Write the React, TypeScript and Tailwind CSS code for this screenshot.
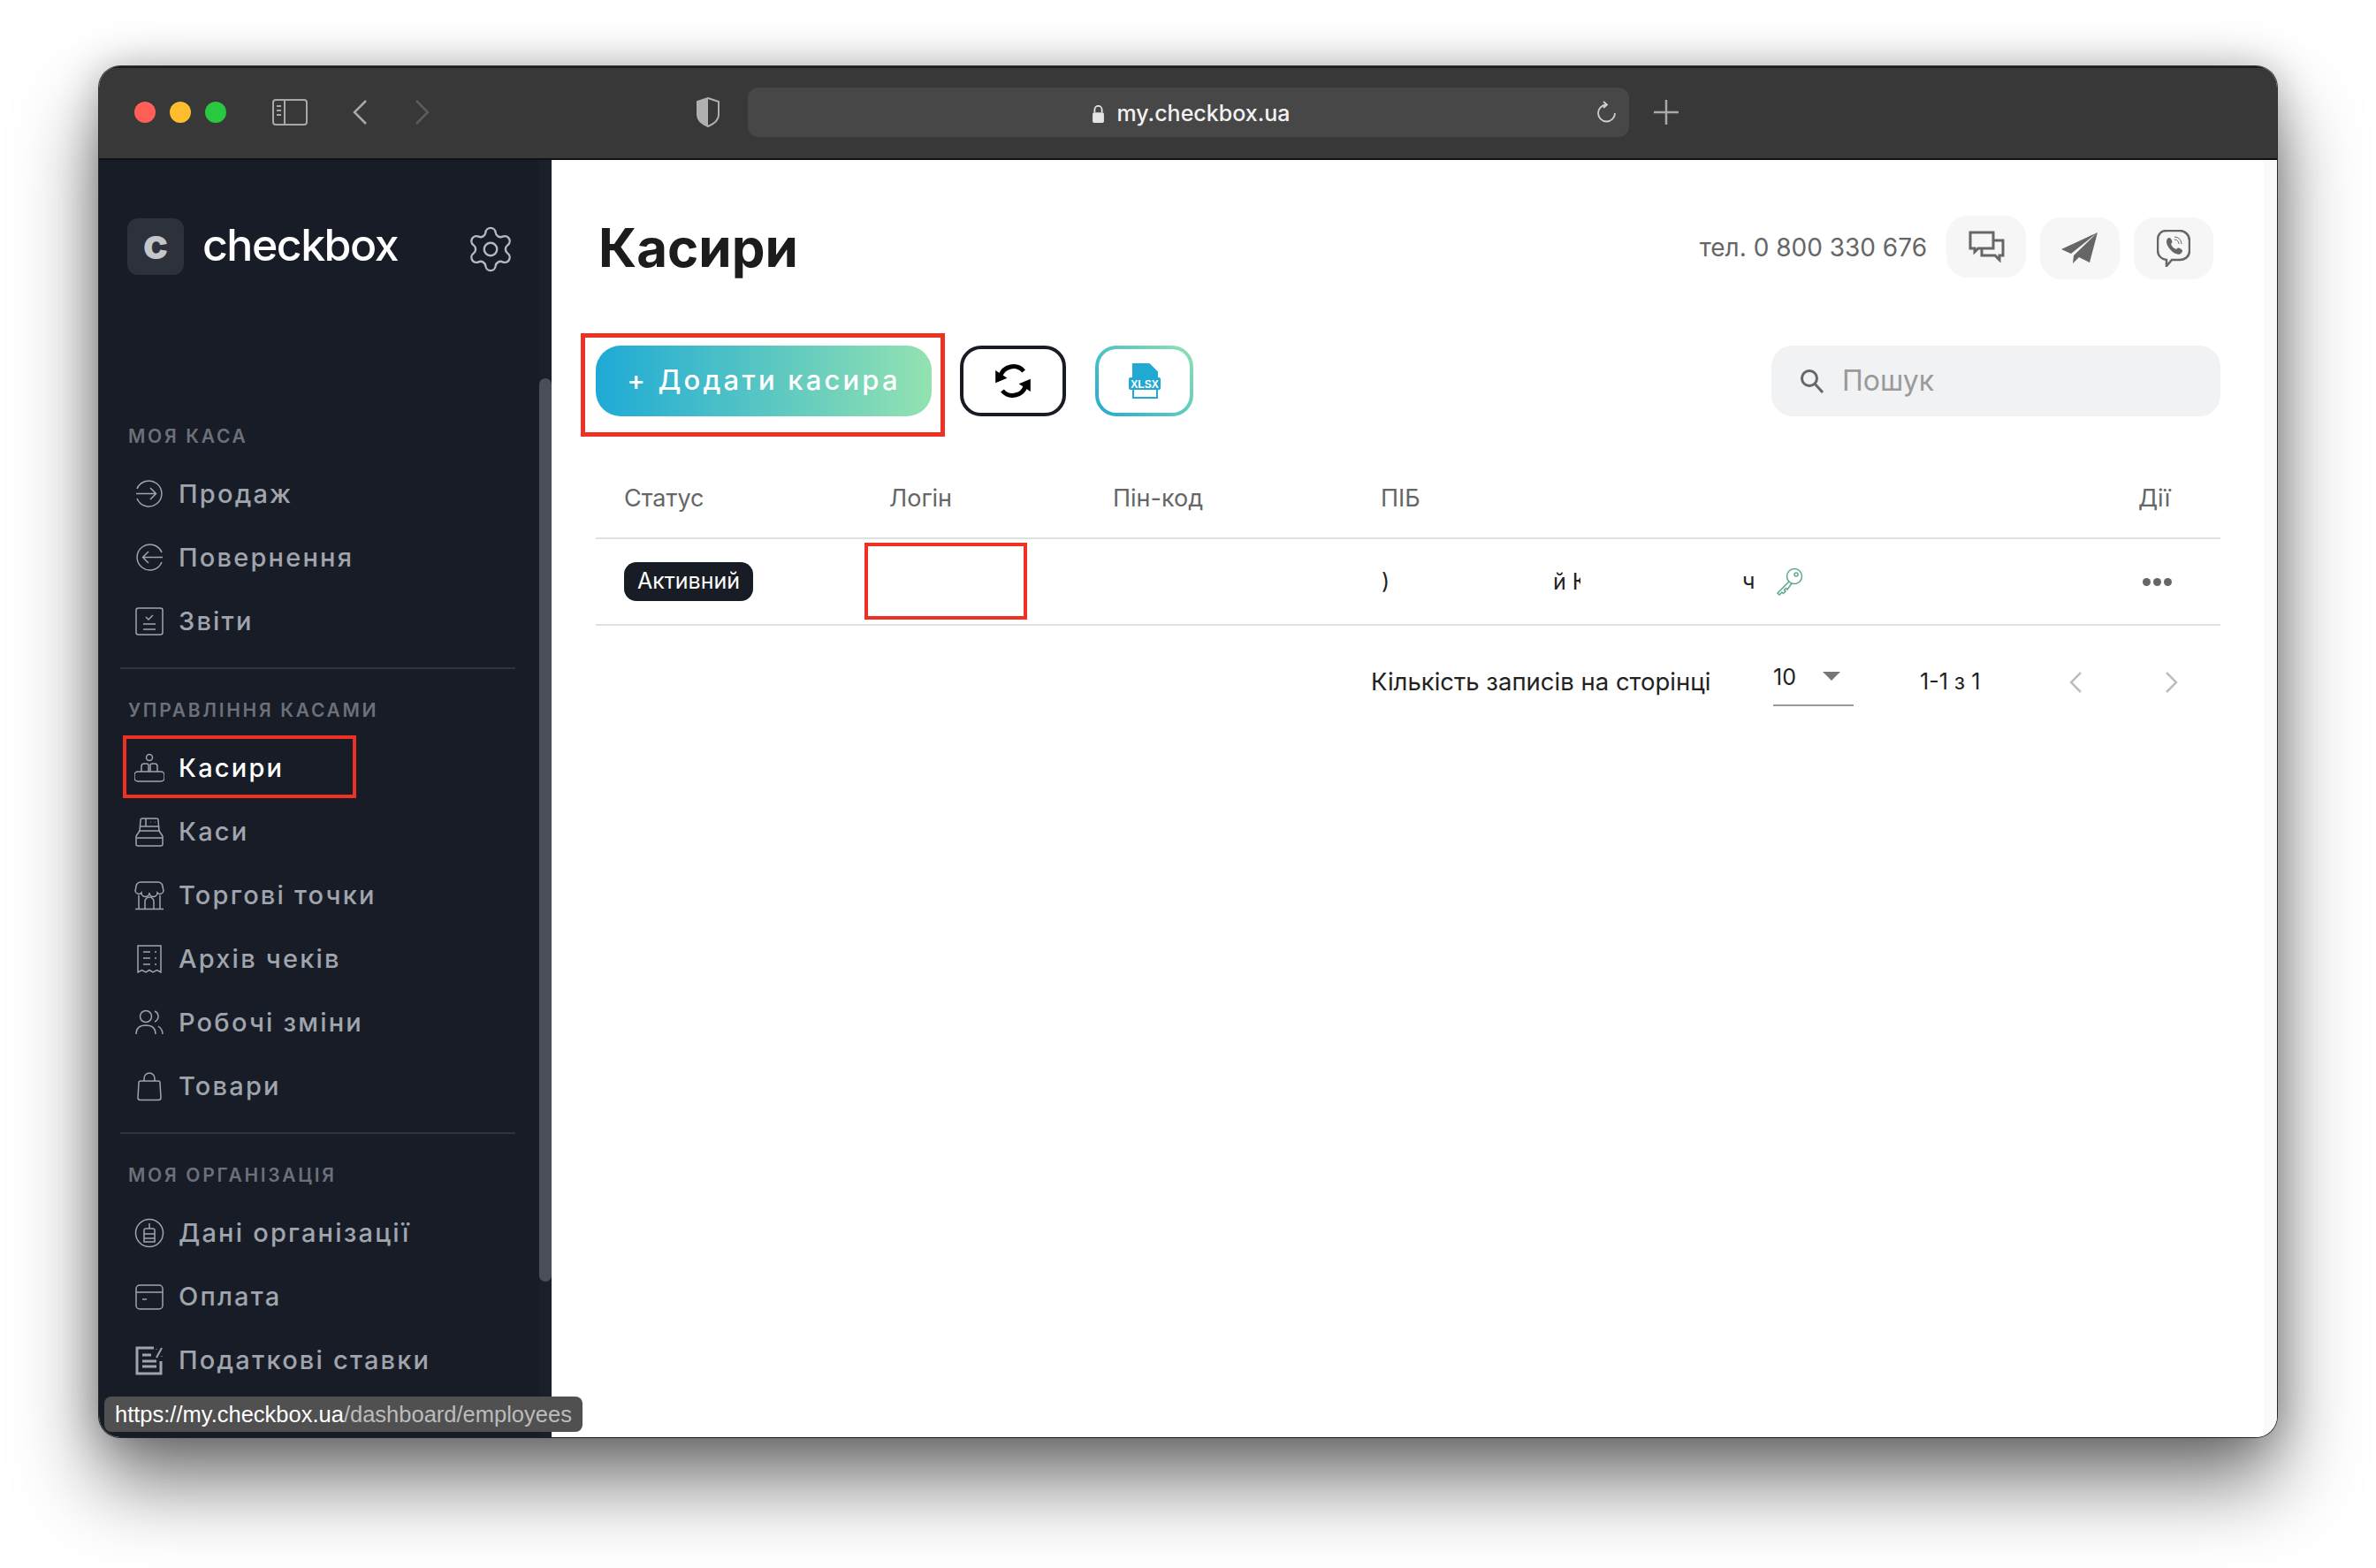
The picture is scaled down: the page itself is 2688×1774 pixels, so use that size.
import { Settings } from "lucide-react";

const iconClass = "w-[34px] h-[34px] shrink-0 fill-none stroke-[#a0a4ad] stroke-[1.5]";

const icons: Record<string, React.ReactNode> = {
  sale: (
    <>
      <path d="M3 11a14.5 14.5 0 1 1 0 11" />
      <path d="M2 16.5h22M18 10l6.5 6.5L18 23" />
    </>
  ),
  back: (
    <>
      <path d="M31 11a14.5 14.5 0 1 0 0 11" />
      <path d="M32 16.5H10M16 10l-6.5 6.5L16 23" />
    </>
  ),
  report: (
    <>
      <rect x="2" y="2" width="30" height="30" rx="2.5" />
      <path d="M13 12l3 3 5-5M10 20h14M10 26h14" />
    </>
  ),
  cashiers: (
    <>
      <circle cx="17" cy="5" r="3.5" />
      <path d="M8 21v-6a3 3 0 0 1 3-3h3a2 2 0 0 1 2 2v7M18 21v-7a2 2 0 0 1 2-2h3a3 3 0 0 1 3 3v6" />
      <rect x="0" y="21" width="34" height="11" rx="4" />
    </>
  ),
  registers: (
    <>
      <path d="M6 16l1-12a2 2 0 0 1 2-2h16a2 2 0 0 1 2 2l1 12" />
      <path d="M13 2v9M7 11h20M18 6h.5M23 6h.5" />
      <path d="M6 16L2 22v9a2 2 0 0 0 2 2h26a2 2 0 0 0 2-2v-9l-4-6zM2 24h30" />
    </>
  ),
  shop: (
    <>
      <path d="M7 2h20a5 5 0 0 1 5 5l1 5a4 4 0 0 1-7 2 4.500 4.500 0 0 1-9 0 4.500 4.500 0 0 1-9 0 4 4 0 0 1-7-2l1-5a5 5 0 0 1 5-5z" />
      <path d="M5 17v15M29 17v15M1 32.500h32M12 32v-8a5 5 0 0 1 10 0v8" />
    </>
  ),
  archive: (
    <>
      <path d="M4 2h26v30l-4.500-2.500L21 32l-4-2.500L13 32l-4.500-2.500L4 32z" />
      <path d="M10 9h8M10 16h8M10 23h8M23 9h2M23 16h2M23 23h2" />
    </>
  ),
  shifts: (
    <>
      <circle cx="13" cy="10" r="6.500" />
      <path d="M2 30c0-7 4-10 11-10s11 3 11 10M23 4a6.500 6.500 0 0 1 0 12M27 21c3 2 5 5 5 9" />
    </>
  ),
  goods: (
    <>
      <path d="M7 11h20a2 2 0 0 1 2 2l1 17a2.500 2.500 0 0 1-2.500 2.500h-21A2.500 2.500 0 0 1 4 30l1-17a2 2 0 0 1 2-2z" />
      <path d="M11 11V8a6 6 0 0 1 12 0v3" />
    </>
  ),
  org: (
    <>
      <circle cx="17" cy="17" r="15.500" />
      <path d="M11 14a2 2 0 0 1 2-2h8a2 2 0 0 1 2 2v13H11zM17 12V6M11 18h12M11 23h12" />
    </>
  ),
  pay: (
    <>
      <rect x="2" y="4" width="30" height="27" rx="4" />
      <path d="M2 12h30M9 20h5" />
    </>
  ),
  tax: (
    <>
      <path d="M22 3H3v29h27V18" strokeWidth={3} />
      <path d="M9 11h10M9 18h16M9 24h16" strokeWidth={3} />
      <path d="M31 3l-6 11M25 4v.5M31 12v.5" strokeWidth={2} />
    </>
  ),
};

function NavIcon({ name }: { name: string }) {
  return (
    <svg viewBox="0 0 34 34" className={iconClass}>
      {icons[name]}
    </svg>
  );
}

function NavItem({ icon, label, active }: { icon: string; label: string; active?: boolean }) {
  return (
    <div className="flex items-center h-[72px] pl-[16px] gap-[16px]">
      <NavIcon name={icon} />
      <span
        className={`font-['Inter',sans-serif] font-medium text-[29px] tracking-[2.2px] ${
          active ? "text-white" : "text-[#a0a4ad]"
        }`}
      >
        {label}
      </span>
    </div>
  );
}

function SectionLabel({ children }: { children: string }) {
  return (
    <div className="h-[28px] leading-[28px] pl-[9px] font-['Inter',sans-serif] font-semibold text-[21px] tracking-[2.7px] text-[#6c7079]">
      {children}
    </div>
  );
}

function Sidebar() {
  return (
    <aside className="relative w-[512px] h-full shrink-0 bg-[#171c26] overflow-hidden">
      <div className="flex items-start h-[299px] pl-[32px] pt-[66px]">
        <div className="flex items-center justify-center w-[64px] h-[64px] rounded-[12px] bg-[#2d313b] font-['Inter',sans-serif] font-extrabold text-[48px] text-[#c4c6ca] pb-[6px]">
          c
        </div>
        <span className="ml-[21px] font-['Inter',sans-serif] font-medium text-[50px] leading-[60px] tracking-[-1.5px] text-white">
          checkbox
        </span>
        <Settings className="ml-[76px] mt-[6px] w-[58px] h-[58px] text-[#b5b8be] shrink-0" strokeWidth={1} />
      </div>

      <div className="flex flex-col pl-[24px] w-[471px]">
        <SectionLabel>МОЯ КАСА</SectionLabel>
        <div className="mt-[15px]">
          <NavItem icon="sale" label="Продаж" />
          <NavItem icon="back" label="Повернення" />
          <NavItem icon="report" label="Звіти" />
        </div>
        <div className="mt-[16px] h-[2px] bg-[#2f333c]" />
        <div className="mt-[33px]">
          <SectionLabel>УПРАВЛІННЯ КАСАМИ</SectionLabel>
        </div>
        <div className="relative mt-[15px]">
          <NavItem icon="cashiers" label="Касири" active />
          <div className="absolute left-[3px] -top-[1px] w-[264px] h-[71px] border-[4px] border-[#ee3124]" />
          <NavItem icon="registers" label="Каси" />
          <NavItem icon="shop" label="Торгові точки" />
          <NavItem icon="archive" label="Архів чеків" />
          <NavItem icon="shifts" label="Робочі зміни" />
          <NavItem icon="goods" label="Товари" />
        </div>
        <div className="mt-[16px] h-[2px] bg-[#2f333c]" />
        <div className="mt-[33px]">
          <SectionLabel>МОЯ ОРГАНІЗАЦІЯ</SectionLabel>
        </div>
        <div className="mt-[15px]">
          <NavItem icon="org" label="Дані організації" />
          <NavItem icon="pay" label="Оплата" />
          <NavItem icon="tax" label="Податкові ставки" />
        </div>
      </div>

      {/* scrollbar */}
      <div className="absolute right-0 top-0 bottom-0 w-[14px] bg-[#1a1f29]">
        <div className="absolute left-0 right-0 top-[247px] h-[1022px] rounded-[7px] bg-[#4b4e56]" />
      </div>
    </aside>
  );
}

function TitleBar() {
  return (
    <div className="flex items-center h-[106px] shrink-0 bg-[#383838] border-t-[2px] border-b-[2px] border-t-[#1c1c1c] border-b-[#111111] pb-[2px]">
      <div className="flex items-center gap-[16px] ml-[40px]">
        <div className="w-[24px] h-[24px] rounded-full bg-[#ff5f57]" />
        <div className="w-[24px] h-[24px] rounded-full bg-[#ffbd2e]" />
        <div className="w-[24px] h-[24px] rounded-full bg-[#28c840]" />
      </div>
      <svg viewBox="0 0 40 30" className="ml-[52px] w-[40px] h-[30px] fill-none stroke-[#a8a8a8] stroke-[2]">
        <rect x="1" y="1" width="38" height="28" rx="3" />
        <path d="M14 1v28M5 8h5M5 13h5M5 18h5" />
      </svg>
      <svg viewBox="0 0 18 30" className="ml-[50px] w-[18px] h-[30px] fill-none stroke-[#a8a8a8] stroke-[2.500]">
        <path d="M16 2L3 15l13 13" />
      </svg>
      <svg viewBox="0 0 18 30" className="ml-[53px] w-[18px] h-[30px] fill-none stroke-[#5c5c5c] stroke-[2.500]">
        <path d="M2 2l13 13L2 28" />
      </svg>
      <svg viewBox="0 0 28 34" className="ml-[300px] w-[28px] h-[34px]">
        <path d="M14 1l12 4v15c0 6-5 10-12 13C7 30 2 26 2 20V5z" fill="none" stroke="#b0b0b0" strokeWidth="2" />
        <path d="M14 1L2 5v15c0 6 5 10 12 13z" fill="#b0b0b0" />
      </svg>
      <div className="relative flex items-center justify-center ml-[31px] w-[997px] h-[56px] pl-[6px] rounded-[12px] bg-[#474747]">
        <svg viewBox="0 0 16 24" className="w-[15px] h-[22px] mr-[13px] mt-[3px]">
          <path d="M3.500 10V6.500a4.500 4.500 0 0 1 9 0V10" fill="none" stroke="#e4e4e4" strokeWidth="2" />
          <rect x="1" y="10" width="14" height="13" rx="2" fill="#e4e4e4" />
        </svg>
        <span className="mt-[3px] font-['Inter',sans-serif] font-medium text-[25px] text-[#f2f2f2]">my.checkbox.ua</span>
        <svg viewBox="0 0 24 26" className="absolute left-[960px] w-[24px] h-[26px] fill-none stroke-[#d0d0d0] stroke-[1.800]">
          <path d="M21 14a9.500 9.500 0 1 1-9.500-9.500M8 1l4 3.500L8 8" />
        </svg>
      </div>
      <svg viewBox="0 0 28 28" className="ml-[28px] w-[28px] h-[28px] fill-none stroke-[#a8a8a8] stroke-[2.500]">
        <path d="M14 0v28M0 14h28" />
      </svg>
    </div>
  );
}

function ContactButton({ children, raised }: { children: React.ReactNode; raised?: boolean }) {
  return (
    <div
      className={`flex items-center justify-center w-[90px] h-[70px] rounded-[24px] bg-[#f6f6f6] ${
        raised ? "-mt-[4px]" : ""
      }`}
    >
      {children}
    </div>
  );
}

function Header() {
  return (
    <div className="flex items-center justify-between h-[192px] pl-[53px] pr-[57px] pt-[8px]">
      <h1 className="-mt-[3px] font-['Inter',sans-serif] font-bold text-[60px] text-[#1c1c1c]">Касири</h1>
      <div className="flex items-center">
        <span className="-mt-[2px] font-['Inter',sans-serif] text-[28px] text-[#666666] mr-[22px]">тел. 0 800 330 676</span>
        <div className="flex items-center gap-[16px]">
          <ContactButton raised>
            <svg viewBox="0 0 42 36" className="w-[42px] h-[36px] fill-none stroke-[#666666] stroke-[3]">
              <path d="M3 2h26v18H12l-4 4v-4H3z" fill="#f6f6f6" />
              <path d="M30 11h10v17h-4v5l-5-5H16v-8" />
            </svg>
          </ContactButton>
          <ContactButton>
            <svg viewBox="0 0 42 36" className="w-[42px] h-[36px]">
              <path d="M41 0L0 19l11 5L41 0zM41 0L14 26l-1 9 7-7 12 6z" fill="#666666" />
            </svg>
          </ContactButton>
          <ContactButton>
            <svg viewBox="0 0 38 42" className="w-[38px] h-[42px] fill-none stroke-[#666666]">
              <path d="M11 1h15c6 0 11 5 11 11v12c0 6-5 10-11 10H17l-6 7v-7C5 33 1 29 1 23V12C1 5 5 1 11 1z" strokeWidth="2.500" />
              <path d="M12 10c2-2 4-1 5 2 1 2 0 3-1 4 1 3 3 5 6 6 1-1 2-2 4-1 3 1 4 3 2 5-2 3-6 2-10-1-5-4-9-11-6-15z" fill="#666666" stroke="none" />
              <path d="M20 8a8 8 0 0 1 8 8M20 11a5 5 0 0 1 5 5" strokeWidth="1" />
            </svg>
          </ContactButton>
        </div>
      </div>
    </div>
  );
}

function Toolbar() {
  return (
    <div className="flex items-center h-[117px] mt-[4px] pl-[33px] pr-[49px]">
      <div className="flex items-center justify-center w-[412px] h-[117px] pl-[2px] border-[5px] border-[#ee3124]">
        <button className="w-[380px] h-[80px] mb-[10px] rounded-[28px] bg-[linear-gradient(90deg,#1eaad6,#93e2b0)] font-['Inter',sans-serif] font-medium text-[31px] tracking-[3.2px] text-white">
          + Додати касира
        </button>
      </div>
      <div className="flex items-center justify-center ml-[17px] mb-[10px] w-[120px] h-[80px] rounded-[24px] border-[4px] border-[#181c25]">
        <svg viewBox="0 0 40 40" className="w-[44px] h-[44px] fill-none stroke-black stroke-[4.5]">
          <path d="M7 15A14 14 0 0 1 31 10" />
          <path d="M33 25A14 14 0 0 1 9 30" />
          <path d="M2 9l12 8-12 5z" fill="#000" stroke="none" />
          <path d="M38 31l-12-8 12-5z" fill="#000" stroke="none" />
        </svg>
      </div>
      <div className="flex items-center justify-center ml-[33px] mb-[10px] w-[111px] h-[80px] rounded-[24px] p-[4px] bg-[linear-gradient(45deg,#1eaad6,#93e2b0)]">
        <div className="flex items-center justify-center w-full h-full rounded-[20px] bg-white">
          <svg viewBox="0 0 36 40" className="w-[36px] h-[40px]">
            <path d="M5 1h18l9 9v29H5z" fill="none" stroke="#22a9d3" strokeWidth="2" />
            <path d="M5 1h18l9 9v8H5z" fill="#22a9d3" />
            <rect x="0" y="16" width="36" height="14" rx="2" fill="#22a9d3" />
            <text x="18" y="27.500" textAnchor="middle" fill="#ffffff" fontSize="12" fontWeight="700" fontFamily="Liberation Sans, sans-serif">XLSX</text>
          </svg>
        </div>
      </div>
      <div className="flex items-center ml-auto mb-[10px] w-[508px] h-[80px] rounded-[24px] bg-[#f0f2f4] pl-[32px]">
        <svg viewBox="0 0 28 28" className="w-[28px] h-[28px] fill-none stroke-[#666666] stroke-[3]">
          <circle cx="11" cy="11" r="8.500" />
          <path d="M17 17l9 10" />
        </svg>
        <span className="ml-[20px] font-['Inter',sans-serif] text-[32px] text-[#9a9a9a]">Пошук</span>
      </div>
    </div>
  );
}

function Table() {
  return (
    <div className="relative ml-[50px] mr-[49px] font-['Inter',sans-serif]">
      <div className="grid grid-cols-[300px_253px_302px_856px_94px] items-center h-[116px] border-b-[2px] border-[#e0e0e0] pl-[32px] pt-[26px] text-[27px] text-[#666666]">
        <span>Статус</span>
        <span>Логін</span>
        <span>Пін-код</span>
        <span className="pl-[1px]">ПІБ</span>
        <span className="pl-[2px]">Дії</span>
      </div>
      <div className="grid grid-cols-[300px_253px_302px_856px_94px] items-center h-[98px] border-b-[2px] border-[#e0e0e0] pl-[32px] text-[25px] text-[#222222]">
        <span className="flex items-center justify-center w-[146px] h-[44px] rounded-[14px] bg-[#181c25] text-[25px] text-white">
          Активний
        </span>
        <span />
        <span />
        <span className="flex items-center">
          <span className="w-[10px] ml-[2px]">)</span>
          <span className="ml-[184px] w-[31px] h-[30px] leading-[30px] overflow-hidden whitespace-nowrap">й К</span>
          <span className="ml-[183px]">ч</span>
          <svg viewBox="0 0 32 32" className="ml-[24px] w-[32px] h-[32px] fill-none stroke-[#5fa58f] stroke-[1.500]">
            <circle cx="21" cy="10" r="8.500" />
            <circle cx="23" cy="8" r="2" />
            <path d="M15 16L2 29l2 2 3-3 1.500 1.500L11 27l-1.500-1.500 2-2 1.500 1.500 5-7" />
          </svg>
        </span>
        <span className="flex gap-[3px] pl-[7px]">
          <span className="w-[9px] h-[9px] rounded-full bg-[#666666]" />
          <span className="w-[9px] h-[9px] rounded-full bg-[#666666]" />
          <span className="w-[9px] h-[9px] rounded-full bg-[#666666]" />
        </span>
      </div>
      <div className="absolute left-[304px] top-[120px] w-[184px] h-[87px] border-[4px] border-[#ee3124]" />
    </div>
  );
}

function Pagination() {
  return (
    <div className="flex items-center h-[128px] ml-[927px] font-['Inter',sans-serif] text-[25px] text-[#222222]">
      <span className="w-[455px] text-[27.500px]">Кількість записів на сторінці</span>
      <div className="relative flex items-start w-[91px] h-[54px] border-b-[2px] border-[#999999] pt-[3px]">
        <span>10</span>
        <div className="ml-[30px] mt-[12px] w-0 h-0 border-x-[10px] border-x-transparent border-t-[10px] border-t-[#777777]" />
      </div>
      <span className="ml-[75px] w-[168px]">1-1 з 1</span>
      <svg viewBox="0 0 16 26" className="w-[16px] h-[26px] fill-none stroke-[#bdbdbd] stroke-[2.500]">
        <path d="M14 2L3 13l11 11" />
      </svg>
      <svg viewBox="0 0 16 26" className="ml-[93px] w-[16px] h-[26px] fill-none stroke-[#bdbdbd] stroke-[2.500]">
        <path d="M2 2l11 11L2 24" />
      </svg>
    </div>
  );
}

export default function App() {
  return (
    <div className="w-[2688px] h-[1774px] bg-white pt-[75px] pl-[112px] overflow-hidden">
      <div className="relative flex flex-col w-[2464px] h-[1551px] rounded-[24px] overflow-hidden bg-white shadow-[0_0_0_1px_rgba(0,0,0,0.75),0_50px_90px_rgba(0,0,0,0.55),0_0_45px_rgba(0,0,0,0.25)]">
        <TitleBar />
        <div className="flex flex-1 min-h-0">
          <Sidebar />
          <main className="flex-1 min-w-0 bg-white">
            <Header />
            <Toolbar />
            <Table />
            <Pagination />
          </main>
          <div className="w-[15px] shrink-0 bg-[#fafafa]" />
        </div>
        <div className="absolute left-[6px] bottom-[6px] flex items-center h-[40px] px-[12px] rounded-[8px] bg-[#505050] font-['Liberation_Sans',sans-serif] text-[25.500px] whitespace-nowrap">
          <span className="text-white">https://my.checkbox.ua</span>
          <span className="text-[#bcbcbc]">/dashboard/employees</span>
        </div>
      </div>
    </div>
  );
}
